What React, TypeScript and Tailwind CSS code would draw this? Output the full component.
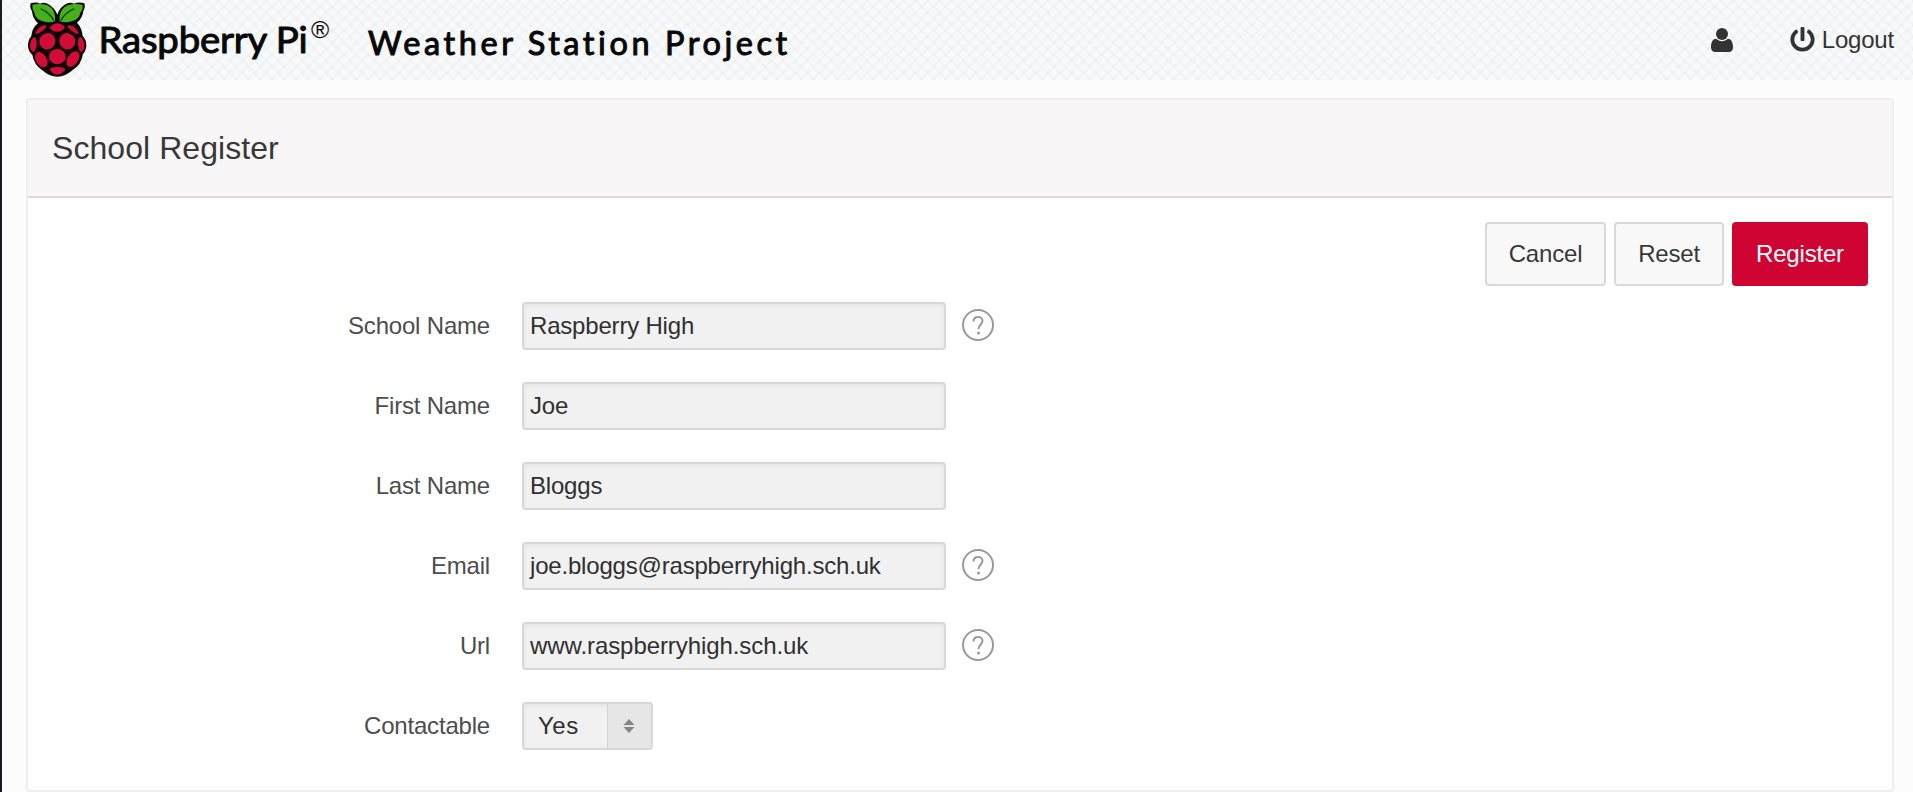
import React from "react";
import { FaPowerOff } from "react-icons/fa";

type Field = { label: string; value: string; help?: boolean; tracking?: string };

const fields: Field[] = [
  { label: "School Name", value: "Raspberry High", help: true },
  { label: "First Name", value: "Joe" },
  { label: "Last Name", value: "Bloggs" },
  { label: "Email", value: "joe.bloggs@raspberryhigh.sch.uk", help: true },
  { label: "Url", value: "www.raspberryhigh.sch.uk", help: true, tracking: "tracking-[-0.08px]" },
];

function Raspberry() {
  return (
    <svg className="h-20 w-[62px] shrink-0" viewBox="78 0 186 240">
      <path
        d="M92 10Q108 5 120 11Q134 5 148 14Q164 24 172 44Q178 24 194 14Q208 5 222 11Q236 5 253 10Q257 22 250 33Q248 54 231 68Q246 84 248 108Q260 120 259 140Q256 156 248 164Q244 194 218 210Q196 230 172 230Q148 230 126 210Q102 194 97 164Q84 154 84 136Q84 120 94 108Q96 84 114 70Q98 56 96 34Q88 22 92 10Z"
        fill="#0b0507"
      />
      <path d="M97 14Q134 8 152 22Q168 36 165 64Q148 70 126 63Q106 56 103 38Q96 28 97 14Z" fill="#46af1c" />
      <path d="M248 14Q211 8 193 22Q176 36 179 64Q196 70 218 63Q238 56 241 38Q250 28 248 14Z" fill="#46af1c" />
      <path d="M122 26Q150 38 162 62M223 26Q194 38 182 62" fill="none" stroke="#0b3306" strokeWidth="3.5" />
      <g fill="#d30b37">
        <path d="M149 83Q158 71 172 70Q186 71 195 83Q185 95 172 95Q158 95 149 83Z" />
        <path d="M106 103Q111 79 137 75Q143 82 128 92Q116 101 106 103Z" />
        <path d="M236 103Q231 79 205 75Q199 82 215 92Q226 101 236 103Z" />
        <ellipse cx="142" cy="124" rx="24" ry="25" transform="rotate(30 142 124)" />
        <ellipse cx="202" cy="124" rx="24" ry="25" transform="rotate(-30 202 124)" />
        <ellipse cx="172" cy="170" rx="25" ry="23" />
        <ellipse cx="124" cy="179" rx="16" ry="25" transform="rotate(-32 124 179)" />
        <ellipse cx="219" cy="177" rx="16" ry="26" transform="rotate(34 219 177)" />
        <path d="M104 110Q113 121 109 139Q106 155 99 157Q89 148 90 134Q92 116 104 110Z" />
        <path d="M240 110Q231 121 235 139Q238 155 244 157Q255 148 253 134Q251 116 240 110Z" />
        <path d="M148 207Q158 200 173 201Q188 200 197 207Q187 223 172 224Q157 223 148 207Z" />
      </g>
    </svg>
  );
}

function Wordmark() {
  return (
    <svg
      className="h-20 w-[710px] [font-variant-ligatures:none]"
      viewBox="88 0 710 80"
      fill="#080808"
      stroke="#080808"
      strokeLinejoin="round"
      fontFamily="Lato, sans-serif"
    >
      <text x="98.500" y="52.500" fontSize="36.500" strokeWidth="1" textLength="209" lengthAdjust="spacingAndGlyphs">
        Raspberry Pi
      </text>
      <text x="311" y="37.500" fontSize="24" strokeWidth="0" fontFamily="Liberation Sans, sans-serif" textLength="18" lengthAdjust="spacingAndGlyphs">
        ®
      </text>
      <text x="368" y="54.500" fontSize="32.500" strokeWidth="1" textLength="419">
        Weather Station Project
      </text>
    </svg>
  );
}

function HelpIcon() {
  return (
    <svg className="ml-4 size-8 -translate-y-px" viewBox="0 0 32 32" fill="none" stroke="#999" strokeWidth="2">
      <circle cx="16" cy="16" r="15" />
      <path d="M11.500 12.500C11.500 9.500 13.400 8 16 8C18.600 8 20.500 9.700 20.500 12C20.500 15.500 16.500 15.500 16.500 20" />
      <circle cx="16.500" cy="24" r="1.500" fill="#999" stroke="none" />
    </svg>
  );
}

const box =
  "h-12 rounded-[4px] border-2 border-[#d8d8d8] bg-[#f1f1f1] text-[#303030] shadow-[inset_0_2px_4px_rgba(0,0,0,0.05)]";
const label = "w-[462px] text-right text-[#4d4d4d]";

export default function App() {
  return (
    <div className="flex h-[792px] w-[1913px] flex-col overflow-hidden border-l-2 border-[#1b1b1f] bg-[#fcfcfc] font-['Liberation_Sans',Arial,sans-serif] text-[24px] leading-8 tracking-[-0.19px]">
      <header className="flex h-20 shrink-0 items-center bg-[#f8f9fa] bg-[repeating-linear-gradient(45deg,transparent_0_3px,rgba(70,75,90,0.035)_5px,transparent_7px_8.5px),repeating-linear-gradient(-45deg,transparent_0_3px,rgba(70,75,90,0.035)_5px,transparent_7px_8.5px)] pr-[19px] pl-6 text-[#333]">
        <Raspberry />
        <Wordmark />
        <div className="ml-auto flex items-center">
          <svg className="mr-[57px] h-6 w-[22px]" viewBox="0 0 22 24" fill="currentColor">
            <circle cx="11" cy="6" r="6" />
            <path d="M5.300 10.800C2 10.800 0 14 0 19.300C0 22.200 1.700 24 4.200 24H17.800C20.300 24 22 22.200 22 19.300C22 14 20 10.800 16.700 10.800C15.300 12.300 13.200 13.200 11 13.200C8.800 13.200 6.700 12.300 5.300 10.800Z" />
          </svg>
          <FaPowerOff className="size-[25px] -translate-y-px" />
          <span className="ml-[7px] inline-block">Logout</span>
        </div>
      </header>

      <main className="mt-[18px] mr-[19px] ml-6 flex h-[694px] shrink-0 flex-col rounded-[4px] border-2 border-[#eee] bg-white">
        <div className="flex h-[98px] shrink-0 items-center border-b-2 border-[#dfdada] bg-[#f8f6f7] pl-6">
          <h1 className="text-[32px] leading-10 tracking-[0.06px] text-[#383838]">School Register</h1>
        </div>
        <div className="mt-6 mr-6 flex h-16 justify-end gap-2 text-[#383838]">
          <button className="w-[121px] rounded-[4px] border-2 border-[#d9d9d9] bg-[#f8f8f8]">Cancel</button>
          <button className="w-[110px] rounded-[4px] border-2 border-[#d9d9d9] bg-[#f8f8f8]">Reset</button>
          <button className="w-[136px] rounded-[4px] bg-[#d00433] text-white">Register</button>
        </div>
        <form className="mt-4 flex flex-col gap-8">
          {fields.map((f) => (
            <div key={f.label} className="flex h-12 items-center">
              <label className={label}>{f.label}</label>
              <div className={`${box} ${f.tracking ?? ""} ml-8 flex w-[424px] items-center pl-[6px]`}>{f.value}</div>
              {f.help && <HelpIcon />}
            </div>
          ))}
          <div className="flex h-12 items-center">
            <label className={label}>Contactable</label>
            <div className={`${box} ml-8 flex w-[131px] items-stretch overflow-hidden`}>
              <span className="flex flex-1 items-center pl-[14px] tracking-[0.5px]">Yes</span>
              <span className="flex w-[44px] items-center justify-center border-l border-[#d3d3d3] bg-[#e6e6e6] pr-0.5">
                <svg className="h-4 w-3" viewBox="0 0 12 16" fill="#858585">
                  <path d="M6 1L11.500 7H0.500ZM6 15L11.500 9H0.500Z" />
                </svg>
              </span>
            </div>
          </div>
        </form>
      </main>
    </div>
  );
}
